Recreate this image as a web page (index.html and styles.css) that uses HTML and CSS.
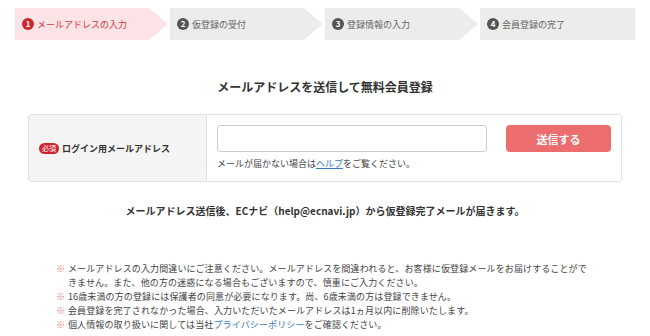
FILE: index.html
```html
<!DOCTYPE html>
<html>
<head>
	<meta http-equiv="Content-Type" content="text/html; charset=utf-8" />
	<meta name="viewport" content="width=device-width, initial-scale=1">
<title>無料会員登録</title>
<link rel="stylesheet" href="styles.css">
</head>
<body>

<div class="steps">
	<div class="step now"><span class="num">1</span>メールアドレスの入力</div>
	<div class="step"><span class="num">2</span>仮登録の受付</div>
	<div class="step"><span class="num">3</span>登録情報の入力</div>
	<div class="step last"><span class="num">4</span>会員登録の完了</div>
</div>

<h2 class="ttl">メールアドレスを送信して無料会員登録</h2>

<div class="frm">
	<div class="lbl">
		<span class="must">必須</span>ログイン用メールアドレス
	</div>
	<div class="fld">
		<div class="row">
			<input type="text" class="mail">
			<button class="send">送信する</button>
		</div>
		<p class="help">メールが届かない場合は<a href="#">ヘルプ</a>をご覧ください。</p>
	</div>
</div>

<p class="info">メールアドレス送信後、ECナビ（help@ecnavi.jp）から仮登録完了メールが届きます。</p>

<ul class="notes">
	<li><span class="kome">※</span><span class="txt">メールアドレスの入力間違いにご注意ください。メールアドレスを間違われると、お客様に仮登録メールをお届けすることができません。また、他の方の迷惑になる場合もございますので、慎重にご入力ください。</span></li>
	<li><span class="kome">※</span><span class="txt">16歳未満の方の登録には保護者の同意が必要になります。尚、6歳未満の方は登録できません。</span></li>
	<li><span class="kome">※</span><span class="txt">会員登録を完了されなかった場合、入力いただいたメールアドレスは1ヵ月以内に削除いたします。</span></li>
	<li><span class="kome">※</span><span class="txt">個人情報の取り扱いに関しては当社<a href="#">プライバシーポリシー</a>をご確認ください。</span></li>
</ul>

</body>
</html>
```

FILE: styles.css
```css
body{
	margin:0px;
	padding:0px;
	background:#fff;
	color:#333;
	font-family:"Noto Sans CJK JP","Noto Sans",sans-serif;
}
.steps{
	display:flex;
	padding:8px 15px 0px;
}
.step{
	width:153px;
	height:32px;
	margin-right:2px;
	background:#ececec;
	color:#666;
	font-size:9px;
	display:flex;
	align-items:center;
	padding-left:7px;
	box-sizing:border-box;
	clip-path:polygon(0 0, calc(100% - 19px) 0, 100% 50%, calc(100% - 19px) 100%, 0 100%);
}
.step.now{
	background:#fce3e5;
	color:#d23a41;
}
.step.last{
	width:155px;
	margin-right:0px;
	clip-path:none;
}
.num{
	width:12px;
	height:12px;
	border-radius:50%;
	background:#555;
	color:#fff;
	font-size:8px;
	font-weight:bold;
	line-height:12px;
	text-align:center;
	margin-right:3px;
}
.now .num{
	background:#cf262d;
}
.ttl{
	margin:39px 0px 0px;
	font-size:12px;
	line-height:16px;
	text-align:center;
	font-weight:bold;
	color:#333;
}
.frm{
	display:flex;
	width:594px;
	margin:19px 0px 0px 28px;
	border:1px solid #e2e2e2;
	border-radius:3px;
	box-sizing:border-box;
}
.lbl{
	width:178px;
	background:#f4f4f4;
	border-right:1px solid #e2e2e2;
	display:flex;
	align-items:center;
	padding-left:10px;
	box-sizing:border-box;
	font-size:9px;
	font-weight:bold;
}
.must{
	background:#cf262d;
	color:#fff;
	font-size:7px;
	line-height:11px;
	padding:0px 3px;
	border-radius:6px;
	margin-right:3px;
	font-weight:normal;
}
.fld{
	padding:10px 0px 11px 10px;
}
.row{
	display:flex;
}
.mail{
	width:270px;
	height:27px;
	box-sizing:border-box;
	border:1px solid #ccc;
	border-radius:3px;
	margin:0px;
}
.send{
	width:105px;
	height:27px;
	margin-left:19px;
	background:#ec6d6d;
	border:none;
	border-radius:4px;
	color:#fff;
	font-family:inherit;
	font-size:11px;
	font-weight:bold;
}
.help{
	margin:6px 0px 0px;
	font-size:9px;
	line-height:12px;
	color:#444;
}
a{
	color:#3a7ac0;
}
.notes a{
	text-decoration:none;
}
.info{
	margin:22px 0px 0px;
	text-align:center;
	font-size:10px;
	line-height:14px;
	font-weight:bold;
}
.notes{
	list-style:none;
	margin:44px 0px 0px;
	padding:0px 0px 0px 56px;
	font-size:9px;
	line-height:13.5px;
	color:#444;
	letter-spacing:0.12px;
}
.notes li{
	display:flex;
	margin-bottom:0.5px;
}
.kome{
	width:12px;
	flex-shrink:0;
	color:#e57878;
}
.txt{
	width:526px;
}
```
